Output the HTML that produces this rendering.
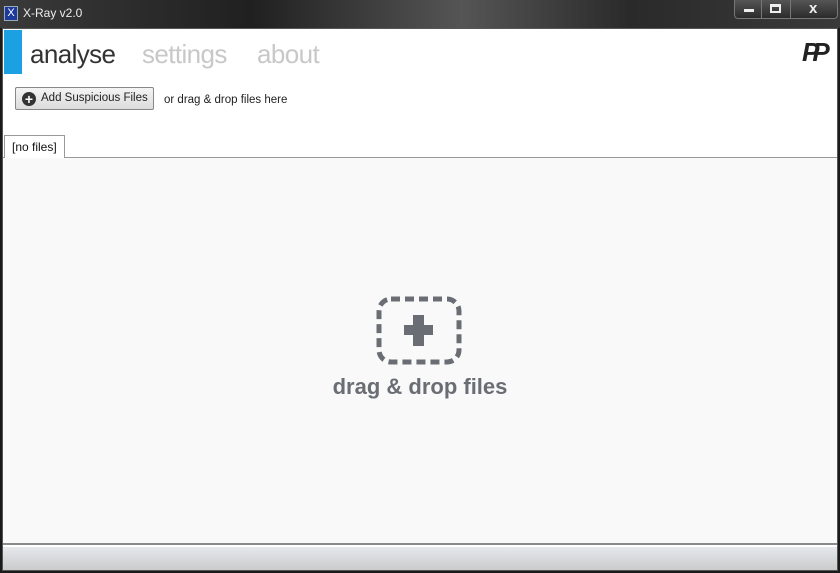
<!DOCTYPE html>
<html><head><style>
*{margin:0;padding:0;box-sizing:border-box}
body{width:840px;height:573px;overflow:hidden;background:#1a1a1a;font-family:"Liberation Sans",sans-serif;position:relative}
.title{position:absolute;left:0;top:0;width:840px;height:28px;background:linear-gradient(90deg,#3a3a3a 0,#202020 30%,#555 55%,#2a2a2a 75%,#3a3a3a 100%)}
.ico{position:absolute;left:4px;top:6px;width:14px;height:15px;background:#1d3a9a;border:1px solid #9ab;color:#fff;font-size:11px;text-align:center;line-height:13px}
.tt{position:absolute;left:23px;top:6px;color:#eee;font-size:12px}
.btns{position:absolute;left:734px;top:0;width:104px;height:19px;border:1px solid #777;border-top:none;border-radius:0 0 4px 4px;background:linear-gradient(#555,#2b2b2b)}
.btns div{position:absolute;top:0;height:18px;border-left:1px solid #777}
.win{position:absolute;left:2px;top:28px;width:836px;height:543px;background:#fff;border:1px solid #555}
.blue{position:absolute;left:1px;top:1px;width:18px;height:44px;background:#1ba1e2}
.nav{position:absolute;top:10px;font-size:26px;color:#c8c8c8;letter-spacing:-0.6px}
.btn{position:absolute;left:12px;top:58px;width:139px;height:23px;border:1px solid #888;border-radius:2px;background:linear-gradient(#f4f4f4,#dcdcdc);font-size:11.5px;color:#222;line-height:21px;padding-left:25px}
.btn i{position:absolute;left:6px;top:4px;width:14px;height:14px;border-radius:50%;background:#333;color:#fff;font-style:normal;font-size:14px;line-height:14px;text-align:center;font-weight:bold}
.hint{position:absolute;left:161px;top:65px;font-size:11.5px;color:#222}
.tab{position:absolute;left:1px;top:106px;width:61px;height:23px;border:1px solid #999;border-bottom:none;background:#fff;font-size:12px;padding:4px 0 0 7px;color:#111;z-index:2}
.content{position:absolute;left:0;top:128px;width:834px;height:388px;background:#f9f9f9;border-top:1px solid #999;border-bottom:2px solid #8a8a8a}
.status{position:absolute;left:0;top:518px;width:834px;height:23px;background:linear-gradient(#e6e8eb,#cbcbcd)}
.dd{position:absolute;left:0;width:834px;top:345px;text-align:center;font-size:22px;font-weight:bold;color:#6a6e74}
</style></head><body>
<div class="title"><div class="ico">X</div><div class="tt">X-Ray v2.0</div>
<div class="btns"><div style="left:26px;width:1px"></div><div style="left:55px;width:1px"></div>
<span style="position:absolute;left:9px;top:9px;width:10px;height:3px;background:#eee"></span>
<span style="position:absolute;left:35px;top:4px;width:11px;height:9px;border:2px solid #eee;border-top-width:3px"></span>
<span style="position:absolute;left:74px;top:0;color:#eee;font-size:15px;font-weight:bold">x</span></div></div>
<div class="win">
<div class="blue"></div>
<div class="nav" style="left:27px;color:#333">analyse</div>
<div class="nav" style="left:139px">settings</div>
<div class="nav" style="left:254px">about</div>
<div style="position:absolute;left:799px;top:8px;font-size:26px;font-weight:bold;font-style:italic;color:#222;letter-spacing:-7px">PP</div>
<div class="btn"><i>+</i>Add Suspicious Files</div>
<div class="hint">or drag &amp; drop files here</div>
<div class="tab">[no files]</div>
<div class="content"></div>
<svg style="position:absolute;left:372px;top:266px" width="90" height="72" viewBox="0 0 90 72">
<rect x="4" y="4" width="80" height="63" rx="12" fill="none" stroke="#6a6e74" stroke-width="5" stroke-dasharray="9 5"/>
<rect x="38" y="20" width="11" height="31" fill="#6a6e74"/><rect x="29" y="30" width="29" height="10" fill="#6a6e74"/></svg>
<div class="dd">drag &amp; drop files</div>
<div class="status"></div>
</div>
</body></html>
